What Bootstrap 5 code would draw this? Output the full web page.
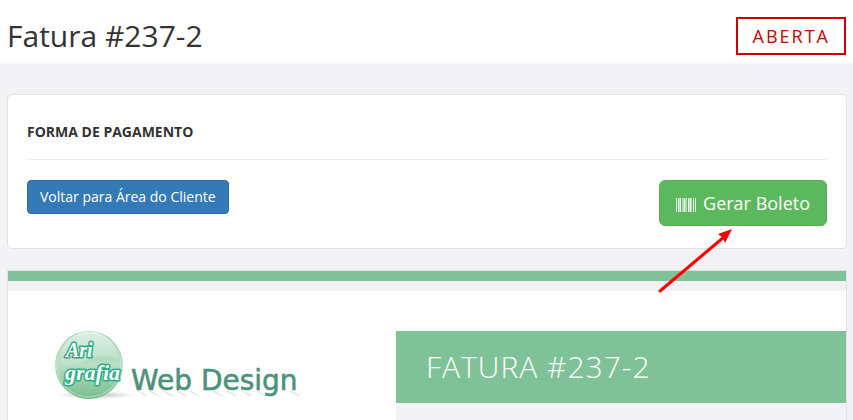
<!DOCTYPE html>
<html lang="pt-BR">
<head>
<meta charset="utf-8">
<meta name="viewport" content="width=device-width, initial-scale=1">
<title>Fatura #237-2</title>
<link href="https://cdn.jsdelivr.net/npm/bootstrap@5.3.0/dist/css/bootstrap.min.css" rel="stylesheet">
<style>
body{background:#f3f3f5;color:#333;font-family:"Open Sans","Noto Sans",sans-serif;font-size:14px;line-height:20px}
.page-head{padding:16px 7px 8px}
.page-head h1{font-size:30px;line-height:39px;font-weight:400}
.status-tag{border:2px solid #c00;color:#c00;font-size:18px;line-height:34px;font-weight:500;padding:0 14px 0 15px;letter-spacing:2px}
.page-main{padding:31px 6px 0 7px}
.panel{background:#fff;border:1px solid #e2e2e4}
.payment{border-radius:5px;padding:27px 19px 22px;margin-bottom:21px}
.payment h2{font-size:14px;line-height:20px;font-weight:700;margin-bottom:17px}
.payment hr{border-color:#eee;opacity:1;margin:0 0 20px}
.btn{color:#fff}
.btn:hover{color:#fff}
.btn-back{background:#337ab7;border-color:#2e6da4;border-radius:4px;font-size:14px;line-height:20px;padding:6px 12px}
.btn-slip{background:#5cb85c;border-color:#55b055;border-radius:6px;font-size:18px;line-height:24px;padding:10px 16px;gap:7px}
.invoice-strip{background:#80c297;height:10px}
.invoice-gap{background:#f3f3f5;height:10px}
.invoice-body{padding-top:40px}
.brand-side{flex:0 0 46.3%;padding-left:44px}
.detail-side{background:#f3f3f5}
.detail-side h2{background:#80c297;color:#fff;font-size:30px;line-height:40px;font-weight:300;letter-spacing:1px;padding:16px 30px;margin:0}
.pointer{right:113px;top:227px;pointer-events:none}
</style>
<script src="https://cdn.jsdelivr.net/npm/bootstrap@5.3.0/dist/js/bootstrap.bundle.min.js"></script>
</head>
<body class="d-flex flex-column min-vh-100 position-relative">
<header class="page-head bg-white d-flex justify-content-between align-items-center">
  <h1 class="m-0">Fatura #237-2</h1>
  <span class="status-tag">ABERTA</span>
</header>
<main class="page-main d-flex flex-column flex-grow-1">
  <section class="panel payment">
    <h2>FORMA DE PAGAMENTO</h2>
    <hr>
    <div class="d-flex justify-content-between align-items-start">
      <button type="button" class="btn btn-back">Voltar para Área do Cliente</button>
      <button type="button" class="btn btn-slip d-inline-flex align-items-center">
        <svg class="mt-1" width="20" height="14" viewBox="0 0 20 14" fill="#fff" shape-rendering="crispEdges" aria-hidden="true"><path opacity=".9" d="M0 0h1v14H0zM2 0h1v14H2zM4 0h1v14H4zM8 0h1v14H8zM12 0h1v14h-1zM14 0h1v14h-1zM17 0h1v14h-1zM19 0h1v14h-1z"/><path opacity=".5" d="M3 0h1v14H3zM6 0h2v14H6zM9 0h2v14H9zM13 0h1v14h-1zM15 0h1v14h-1z"/></svg>Gerar Boleto
      </button>
    </div>
  </section>
  <section class="panel border-bottom-0 d-flex flex-column flex-grow-1">
    <div class="invoice-strip"></div>
    <div class="invoice-gap"></div>
    <div class="invoice-body d-flex flex-grow-1">
      <div class="brand-side">
        <svg width="260" height="76" viewBox="0 0 260 76" role="img" aria-label="Arigrafia Web Design">
          <defs>
            <linearGradient id="orb" x2="0" y2="1"><stop stop-color="#a2d3b4"/><stop offset=".5" stop-color="#b8dec3"/><stop offset="1" stop-color="#75bd8b"/></linearGradient>
            <linearGradient id="gloss" x2="0" y2="1"><stop stop-color="#fff" stop-opacity=".65"/><stop offset="1" stop-color="#fff" stop-opacity=".1"/></linearGradient>
            <radialGradient id="shade"><stop stop-color="#888" stop-opacity=".5"/><stop offset="1" stop-color="#888" stop-opacity="0"/></radialGradient>
          </defs>
          <ellipse cx="44" cy="64" rx="40" ry="4" fill="url(#shade)"/>
          <circle cx="37" cy="34" r="34" fill="url(#orb)"/>
          <circle cx="37" cy="34" r="32" fill="none" stroke="#d5ecdc" stroke-width="1" opacity=".6"/>
          <path d="M8 32A29 29 0 0 1 66 27Q51 21 35 29T8 32Z" fill="url(#gloss)"/>
          <g font-family="'Liberation Serif',serif" font-style="italic" font-weight="700" fill="#fff" stroke="#2bad86" stroke-width="3" stroke-linejoin="round" paint-order="stroke">
            <text x="14" y="26" font-size="20">Ari</text>
            <text x="13" y="49" font-size="22">grafia</text>
          </g>
          <path d="M86 60l9 5M98 60l9 5M111 60l10 5M125 60l10 5M138 60l9 5M161 60l10 5M175 60l9 5M190 60l9 5M205 60l9 5M238 60l10 5" stroke="#9abdb0" stroke-width="1" opacity=".5"/>
          <text x="79" y="59" font-family="'DejaVu Sans',sans-serif" font-size="28" fill="#4c917c" stroke="#4c917c" stroke-width=".6">Web Design</text>
        </svg>
      </div>
      <div class="detail-side flex-grow-1"><h2>FATURA #237-2</h2></div>
    </div>
  </section>
</main>
<svg class="pointer position-absolute" width="82" height="68" viewBox="0 0 82 68" aria-hidden="true"><path d="M2 64L66 10" stroke="#f00" stroke-width="3" stroke-linecap="round"/><path d="M74 2L67 16 65 11 60 7Z" fill="#f00"/></svg>
</body>
</html>
